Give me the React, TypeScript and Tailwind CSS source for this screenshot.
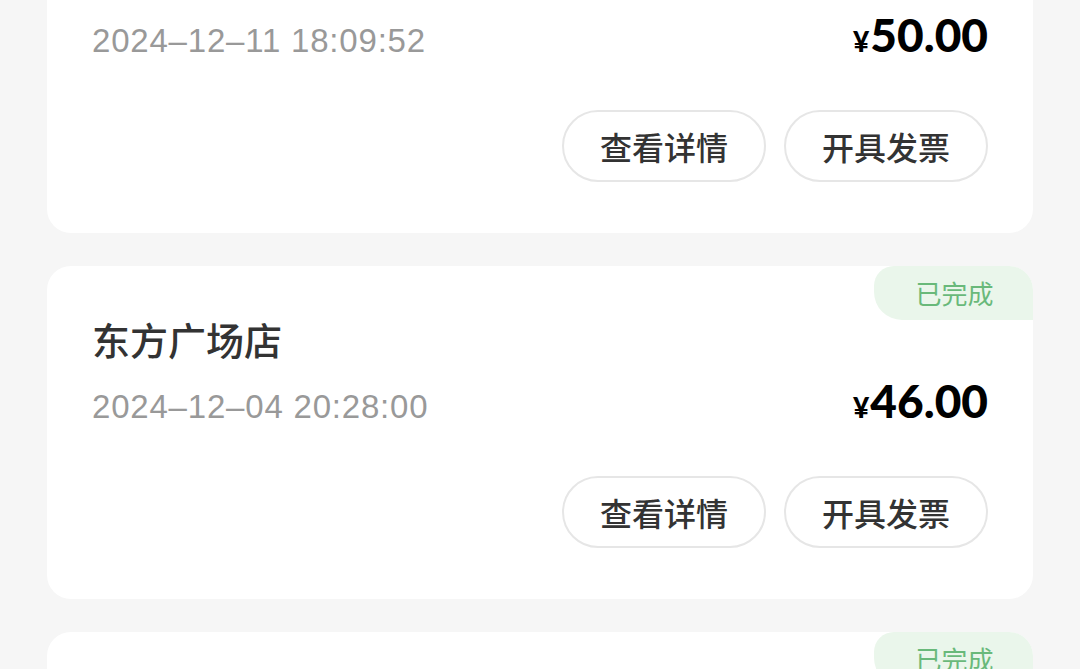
import React from "react";

type Order = { store: string; time: string; amount: string };

const orders: Order[] = [
  { store: "人民广场店", time: "2024–12–11 18:09:52", amount: "50.00" },
  { store: "东方广场店", time: "2024–12–04 20:28:00", amount: "46.00" },
  { store: "万达广场店", time: "2024–11–28 12:15:36", amount: "38.00" },
];

function Card({ o, first }: { o: Order; first?: boolean }) {
  return (
    <div
      className={
        "relative bg-white rounded-[24px] flex flex-col px-[45px] pt-[49px] pb-[51px] " +
        (first ? "mt-[-100px]" : "")
      }
    >
      <div className="absolute top-0 right-0 h-[54px] w-[159px] bg-[#eaf6eb] rounded-tl-[20px] rounded-bl-[28px] rounded-tr-[24px] flex items-center justify-center text-[26px] text-[#69b97a] pl-[2px] pb-[2px]">
        已完成
      </div>
      <div className="text-[38px] leading-[48px] font-medium text-[#333333]">{o.store}</div>
      <div className="mt-[16px] flex items-baseline justify-between">
        <div
          className="text-[33px] leading-[44px] text-[#999999] tracking-[0.8px]"
          style={{ fontFamily: '"Liberation Sans", Arial, sans-serif' }}
        >
          {o.time}
        </div>
        <div className="flex items-baseline text-black" style={{ fontFamily: "Lato, sans-serif" }}>
          <span className="text-[28px] font-black mr-[1px]">¥</span>
          <span className="text-[46px] leading-[44px] font-black">{o.amount}</span>
        </div>
      </div>
      <div className="mt-[47px] flex justify-end gap-[18px]">
        <button className="w-[204px] h-[72px] rounded-full border-2 border-[#e6e6e6] text-[32px] font-medium text-[#333333] flex items-center justify-center">
          查看详情
        </button>
        <button className="w-[204px] h-[72px] rounded-full border-2 border-[#e6e6e6] text-[32px] font-medium text-[#333333] flex items-center justify-center">
          开具发票
        </button>
      </div>
    </div>
  );
}

export default function App() {
  return (
    <div
      className="w-[1080px] h-[669px] overflow-hidden bg-[#f6f6f6] px-[47px] flex flex-col gap-[33px]"
      style={{ fontFamily: '"Noto Sans CJK SC", "Noto Sans", sans-serif' }}
    >
      {orders.map((o, i) => (
        <Card key={i} o={o} first={i === 0} />
      ))}
    </div>
  );
}
